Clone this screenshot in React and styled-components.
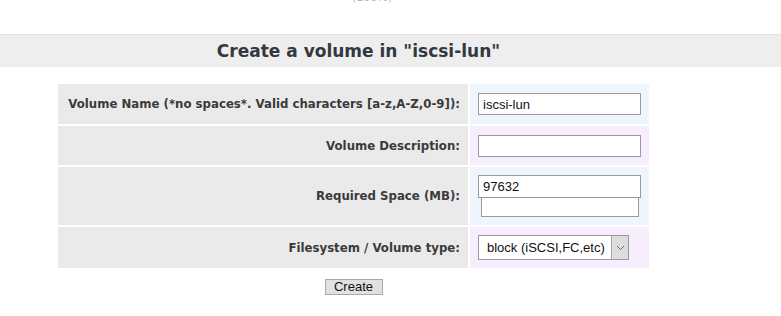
import React from "react";
import styled, { createGlobalStyle } from "styled-components";

const Global = createGlobalStyle`
  html, body { margin: 0; padding: 0; background: #ffffff; }
  body { font-family: "DejaVu Sans", Verdana, sans-serif; overflow: hidden; }
`;

const Page = styled.div`
  width: 781px;
  height: 316px;
  overflow: hidden;
`;

const Percent = styled.div`
  margin-top: -9px;
  height: 14px;
  line-height: 14px;
  font-size: 11px;
  color: #b4b4b4;
  padding-left: 352px;
`;

const Band = styled.div`
  margin-top: 29px;
  height: 32px;
  background: #eeeeee;
  border-top: 1px solid #e2e2e2;
  display: flex;
  align-items: center;
  justify-content: center;
  padding-right: 64px;
`;

const Title = styled.h1`
  margin: 0;
  font-size: 17px;
  font-weight: bold;
  color: #333840;
  font-family: "DejaVu Sans", Verdana, sans-serif;
`;

const Form = styled.div`
  margin: 17px 0 0 58px;
  display: grid;
  grid-template-columns: 410px 179px;
  grid-template-rows: 40px 39px 58px 41px;
  column-gap: 2px;
  row-gap: 2px;
`;

const Label = styled.div`
  background: #eaeaea;
  display: flex;
  align-items: center;
  justify-content: flex-end;
  padding-right: 8px;
  font-size: 11.75px;
  font-weight: bold;
  color: #3a3a3a;
  white-space: nowrap;
`;

const Field = styled.div`
  background: ${(p) => (p.$tone === "purple" ? "#f6eefd" : "#eef5fd")};
  display: flex;
  flex-direction: column;
  justify-content: center;
  align-items: flex-start;
  padding-left: 8px;
`;

const TextInput = styled.input`
  box-sizing: border-box;
  width: ${(p) => p.$w || 163}px;
  height: ${(p) => p.$h || 22}px;
  margin: ${(p) => p.$m || "0"};
  border: 1px solid #9a9a9a;
  background: #fff;
  padding: 0 4px;
  font-family: "Liberation Sans", Tahoma, sans-serif;
  font-size: 13px;
  color: #111;
  outline: none;
`;

const SelectBox = styled.div`
  box-sizing: border-box;
  width: 151px;
  height: 25px;
  border: 1px solid #9a9a9a;
  background: #fff;
  display: flex;
  align-items: stretch;
`;

const Select = styled.select`
  appearance: none;
  -webkit-appearance: none;
  flex: 1;
  min-width: 0;
  border: none;
  background: transparent;
  padding: 0 0 0 8px;
  font-family: "Liberation Sans", Tahoma, sans-serif;
  font-size: 13px;
  color: #111;
  outline: none;
`;

const Arrow = styled.div`
  width: 16px;
  background: #dddddd;
  border-left: 1px solid #a8a8a8;
  display: flex;
  align-items: center;
  justify-content: center;
`;

const Actions = styled.div`
  width: 591px;
  margin: 11px 0 0 58px;
  display: flex;
  justify-content: center;
`;

const Button = styled.button`
  box-sizing: border-box;
  width: 58px;
  height: 16px;
  padding: 0;
  border: 1px solid #a9a9a9;
  background: #e1e1e1;
  font-family: "Liberation Sans", Tahoma, sans-serif;
  font-size: 13px;
  line-height: 14px;
  color: #111;
`;

export default function App() {
  return (
    <Page>
      <Global />
      <Percent>(100%)</Percent>
      <Band>
        <Title>Create a volume in "iscsi-lun"</Title>
      </Band>
      <Form>
        <Label>Volume Name (*no spaces*. Valid characters [a-z,A-Z,0-9]):</Label>
        <Field $tone="blue">
          <TextInput defaultValue="iscsi-lun" />
        </Field>
        <Label>Volume Description:</Label>
        <Field $tone="purple">
          <TextInput defaultValue="" />
        </Field>
        <Label>Required Space (MB):</Label>
        <Field $tone="blue">
          <TextInput defaultValue="97632" $h={23} />
          <TextInput defaultValue="" $w={158} $h={20} $m="-1px 0 0 3px" />
        </Field>
        <Label>Filesystem / Volume type:</Label>
        <Field $tone="purple">
          <SelectBox>
            <Select defaultValue="block">
              <option value="block">block (iSCSI,FC,etc)</option>
            </Select>
            <Arrow>
              <svg width="9" height="6" viewBox="0 0 9 6">
                <path d="M1 1 L4.5 4.5 L8 1" fill="none" stroke="#666" strokeWidth="1" />
              </svg>
            </Arrow>
          </SelectBox>
        </Field>
      </Form>
      <Actions>
        <Button>Create</Button>
      </Actions>
    </Page>
  );
}
